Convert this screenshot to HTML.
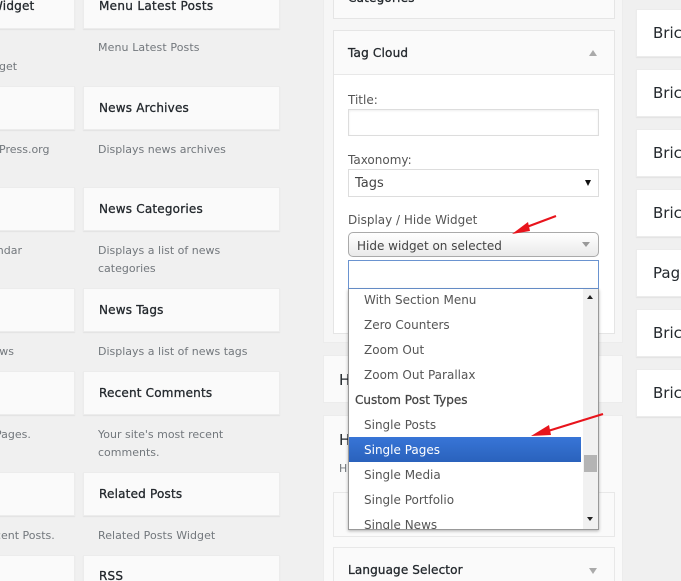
<!DOCTYPE html>
<html>
<head>
<meta charset="utf-8">
<style>
html,body{margin:0;padding:0;background:#f0f0f0;width:681px;height:581px;overflow:hidden;}
#w{position:relative;width:681px;height:581px;overflow:hidden;font-family:"DejaVu Sans","Liberation Sans",sans-serif;}
.a{position:absolute;}
.c{position:absolute;background:#fafafa;box-shadow:0 1px 1px rgba(0,0,0,.06);border:1px solid #ececec;box-sizing:border-box;}
.t{position:absolute;white-space:nowrap;color:#23282d;font-size:12px;line-height:16px;font-weight:400;-webkit-text-stroke:.3px #23282d;letter-spacing:.2px;transform:translateY(1px);}
.d{position:absolute;white-space:nowrap;color:#72777c;font-size:11px;line-height:18px;transform:translateY(1px);}
.l{position:absolute;white-space:nowrap;color:#555;font-size:12px;line-height:16px;transform:translateY(1px);}
.o{position:absolute;left:15px;white-space:nowrap;color:#555;font-size:12px;line-height:16px;transform:translateY(1px);}
.r{position:absolute;white-space:nowrap;color:#23282d;font-size:15px;line-height:20px;left:653px;transform:translateY(1px);}
</style>
</head>
<body>
<div id="w">
<!-- left column -->
<div class="c" style="left:-20px;top:-20px;width:95px;height:49px"></div>
<div class="c" style="left:-20px;top:86px;width:95px;height:44px"></div>
<div class="c" style="left:-20px;top:187px;width:95px;height:44px"></div>
<div class="c" style="left:-20px;top:288px;width:95px;height:44px"></div>
<div class="c" style="left:-20px;top:371px;width:95px;height:44px"></div>
<div class="c" style="left:-20px;top:472px;width:95px;height:44px"></div>
<div class="c" style="left:-20px;top:555px;width:95px;height:44px"></div>
<div class="c" style="left:83px;top:-20px;width:197px;height:49px"></div>
<div class="c" style="left:83px;top:86px;width:197px;height:44px"></div>
<div class="c" style="left:83px;top:187px;width:197px;height:44px"></div>
<div class="c" style="left:83px;top:288px;width:197px;height:44px"></div>
<div class="c" style="left:83px;top:371px;width:197px;height:44px"></div>
<div class="c" style="left:83px;top:472px;width:197px;height:44px"></div>
<div class="c" style="left:83px;top:555px;width:197px;height:44px"></div>

<div class="t" style="left:-9px;top:-3px;">Widget</div>
<div class="t" style="left:99px;top:-3px;letter-spacing:.32px;">Menu Latest Posts</div>
<div class="t" style="left:99px;top:99px;">News Archives</div>
<div class="t" style="left:99px;top:200px;">News Categories</div>
<div class="t" style="left:99px;top:301px;">News Tags</div>
<div class="t" style="left:99px;top:384px;">Recent Comments</div>
<div class="t" style="left:99px;top:485px;">Related Posts</div>
<div class="t" style="left:99px;top:567px;">RSS</div>

<div class="d" style="left:98px;top:38px;letter-spacing:.1px;">Menu Latest Posts</div>
<div class="d" style="left:-11px;top:57px;">idget</div>
<div class="d" style="left:-1px;top:140px;">Press.org</div>
<div class="d" style="left:98px;top:140px;">Displays news archives</div>
<div class="d" style="left:-10px;top:241px;">endar</div>
<div class="d" style="left:98px;top:241px;">Displays a list of news<br>categories</div>
<div class="d" style="left:-11px;top:342px;">&nbsp;ews</div>
<div class="d" style="left:98px;top:342px;">Displays a list of news tags</div>
<div class="d" style="left:-5px;top:425px;">Pages.</div>
<div class="d" style="left:98px;top:425px;">Your site's most recent<br>comments.</div>
<div class="d" style="left:-19px;top:526px;">Recent Posts.</div>
<div class="d" style="left:98px;top:526px;letter-spacing:.05px;">Related Posts Widget</div>

<!-- middle outer panels -->
<div class="a" style="left:323px;top:-10px;width:300px;height:353px;background:#f6f6f6;border:1px solid #ececec;box-sizing:border-box;"></div>
<div class="a" style="left:323px;top:355px;width:300px;height:48px;background:#fafafa;border:1px solid #ececec;box-sizing:border-box;"></div>
<div class="a" style="left:323px;top:415px;width:300px;height:176px;background:#fafafa;border:1px solid #ececec;box-sizing:border-box;"></div>

<!-- Categories -->
<div class="a" style="left:333px;top:-20px;width:282px;height:39px;background:#fafafa;border:1px solid #e5e5e5;box-sizing:border-box;"></div>
<div class="t" style="left:348px;top:-11px;">Categories</div>

<!-- Tag Cloud -->
<div class="a" style="left:333px;top:30px;width:282px;height:304px;background:#fff;border:1px solid #e5e5e5;box-sizing:border-box;"></div>
<div class="a" style="left:334px;top:31px;width:280px;height:44px;background:#fafafa;border-bottom:1px solid #e8e8e8;box-sizing:border-box;"></div>
<div class="t" style="left:348px;top:44px;">Tag Cloud</div>
<div class="a" style="left:589px;top:50px;width:0;height:0;border-left:4px solid transparent;border-right:4px solid transparent;border-bottom:6px solid #aaa;"></div>

<div class="l" style="left:348px;top:91px;">Title:</div>
<div class="a" style="left:348px;top:109px;width:251px;height:27px;background:#fff;border:1px solid #ddd;box-sizing:border-box;box-shadow:inset 0 1px 2px rgba(0,0,0,.07);"></div>
<div class="l" style="left:348px;top:151px;">Taxonomy:</div>
<div class="a" style="left:348px;top:169px;width:251px;height:28px;background:#fff;border:1px solid #ddd;box-sizing:border-box;"></div>
<div class="l" style="left:355px;top:175px;color:#444;font-size:13px;">Tags</div>
<div class="a" style="left:585px;top:180px;width:0;height:0;border-left:3.5px solid transparent;border-right:3.5px solid transparent;border-top:6px solid #111;"></div>
<div class="l" style="left:348px;top:211px;">Display / Hide Widget</div>

<div class="a" style="left:348px;top:232px;width:251px;height:25px;background:linear-gradient(#fff 0%,#f4f4f4 50%,#eaeaea 100%);border:1px solid #aaa;border-radius:5px;box-sizing:border-box;"></div>
<div class="l" style="left:357px;top:237px;color:#444;">Hide widget on selected</div>
<div class="a" style="left:582px;top:242px;width:0;height:0;border-left:4px solid transparent;border-right:4px solid transparent;border-bottom:0;border-top:5px solid #999;"></div>

<div class="a" style="left:348px;top:260px;width:251px;height:29px;background:#fff;border:1px solid #6a93d0;box-sizing:border-box;"></div>

<!-- Helper titles behind -->
<div class="r" style="left:339px;top:369px;">H</div>
<div class="r" style="left:339px;top:429px;">H</div>
<div class="d" style="left:339px;top:459px;">H</div>
<div class="a" style="left:333px;top:492px;width:282px;height:45px;background:#fafafa;border:1px solid #e8e8e8;box-sizing:border-box;"></div>
<div class="a" style="left:333px;top:547px;width:282px;height:50px;background:#fafafa;border:1px solid #e8e8e8;box-sizing:border-box;"></div>
<div class="t" style="left:348px;top:561px;letter-spacing:.14px;">Language Selector</div>
<div class="a" style="left:589px;top:568px;width:0;height:0;border-left:4px solid transparent;border-right:4px solid transparent;border-top:6px solid #aaa;"></div>

<!-- dropdown list -->
<div class="a" style="left:348px;top:289px;width:251px;height:241px;background:#fff;border:1px solid #999;border-top:0;box-sizing:border-box;box-shadow:0 1px 3px rgba(0,0,0,.3);overflow:hidden;">
  <div class="o" style="top:2px;">With Section Menu</div>
  <div class="o" style="top:27px;">Zero Counters</div>
  <div class="o" style="top:52px;">Zoom Out</div>
  <div class="o" style="top:77px;">Zoom Out Parallax</div>
  <div class="o" style="left:6px;top:102px;color:#444;-webkit-text-stroke:.25px #444;">Custom Post Types</div>
  <div class="o" style="top:127px;">Single Posts</div>
  <div class="a" style="left:0;top:148px;width:232px;height:25px;background:linear-gradient(#3875d7 0%,#2a62bc 100%);"></div>
  <div class="o" style="top:152px;color:#fff;">Single Pages</div>
  <div class="o" style="top:177px;">Single Media</div>
  <div class="o" style="top:202px;">Single Portfolio</div>
  <div class="o" style="top:227px;">Single News</div>
  <div class="a" style="left:234px;top:0;width:16px;height:241px;background:#f1f1f1;"></div>
  <div class="a" style="left:235px;top:166px;width:13px;height:17px;background:#b4b4b4;"></div>
  <div class="a" style="left:238px;top:6px;width:0;height:0;border-left:3.5px solid transparent;border-right:3.5px solid transparent;border-bottom:4px solid #222;"></div>
  <div class="a" style="left:238px;top:228px;width:0;height:0;border-left:3.5px solid transparent;border-right:3.5px solid transparent;border-top:4px solid #222;"></div>
</div>

<!-- right column -->
<div class="c" style="left:636px;top:9px;width:60px;height:48px;background:#fff"></div>
<div class="c" style="left:636px;top:69px;width:60px;height:48px;background:#fff"></div>
<div class="c" style="left:636px;top:129px;width:60px;height:48px;background:#fff"></div>
<div class="c" style="left:636px;top:189px;width:60px;height:48px;background:#fff"></div>
<div class="c" style="left:636px;top:249px;width:60px;height:48px;background:#fff"></div>
<div class="c" style="left:636px;top:309px;width:60px;height:48px;background:#fff"></div>
<div class="c" style="left:636px;top:369px;width:60px;height:48px;background:#fff"></div>
<div class="r" style="top:22px;">Bric</div>
<div class="r" style="top:82px;">Bric</div>
<div class="r" style="top:142px;">Bric</div>
<div class="r" style="top:202px;">Bric</div>
<div class="r" style="top:262px;">Page</div>
<div class="r" style="top:322px;">Bric</div>
<div class="r" style="top:382px;">Bric</div>

<!-- red arrows -->
<svg class="a" style="left:0;top:0;" width="681" height="581" viewBox="0 0 681 581">
  <path d="M556 216 L524 228" stroke="#e8141c" stroke-width="2.2" fill="none"/>
  <path d="M512 234 L528 222 L530 231 Z" fill="#e8141c"/>
  <path d="M603 414 L548 431" stroke="#e8141c" stroke-width="2.2" fill="none"/>
  <path d="M531 436 L549 425 L551 435 Z" fill="#e8141c"/>
</svg>
</div>
</body>
</html>
